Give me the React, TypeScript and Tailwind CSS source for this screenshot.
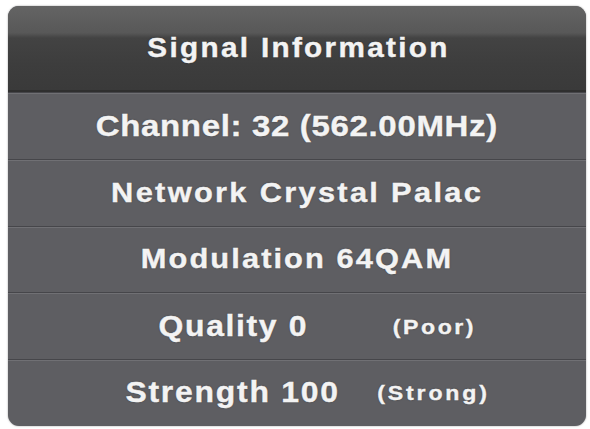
export default function App() {
  const font =
    "font-['Liberation_Sans',Arial,sans-serif] font-bold text-[#f3f3f3] [-webkit-text-stroke:0.4px_#f3f3f3] [text-shadow:0_0_2px_rgba(0,0,0,0.35)]"

  return (
    <div className="w-[590px] h-[429px] bg-white pl-[8px] pr-[4px] pt-[6px] pb-[3px]">
      <div className="h-full flex flex-col rounded-[11px] overflow-hidden bg-[#5e5e62] shadow-[0_0_2px_rgba(0,0,0,0.4)]">
        <div className="h-[86px] shrink-0 flex items-center justify-center bg-[linear-gradient(180deg,#646464_0%,#585858_32%,#434343_38%,#3d3d3d_70%,#3a3a3a_100%)] border-b-2 border-[#2f2f2f]">
          <div className="scale-x-110 pl-[2px]">
            <span className={`${font} text-[27px] tracking-[2.1px]`}>Signal Information</span>
          </div>
        </div>

        <Row>
          <span className={`${font} text-[30px] tracking-[0.6px]`}>Channel: 32 (562.00MHz)</span>
        </Row>
        <Row>
          <span className={`${font} text-[28px] tracking-[2.1px]`}>Network Crystal Palac</span>
        </Row>
        <Row>
          <span className={`${font} text-[28px] tracking-[1.9px]`}>Modulation 64QAM</span>
        </Row>
        <Row className="pl-[40px]" inner="gap-[77px]">
          <span className={`${font} text-[29px] tracking-[1.5px]`}>Quality 0</span>
          <span className={`${font} text-[21px] tracking-[2.3px]`}>(Poor)</span>
        </Row>
        <Row className="pl-[22px]" inner="gap-[34px]">
          <span className={`${font} text-[29px] tracking-[1.6px]`}>Strength 100</span>
          <span className={`${font} text-[21px] tracking-[2.6px]`}>(Strong)</span>
        </Row>
      </div>
    </div>
  )
}

function Row({
  children,
  className = '',
  inner = '',
}: {
  children: React.ReactNode
  className?: string
  inner?: string
}) {
  return (
    <div
      className={`flex-1 flex items-center justify-center border-t border-[#46464a] shadow-[inset_0_1px_0_#707074] ${className}`}
    >
      <div className={`flex items-center scale-x-110 ${inner}`}>{children}</div>
    </div>
  )
}
